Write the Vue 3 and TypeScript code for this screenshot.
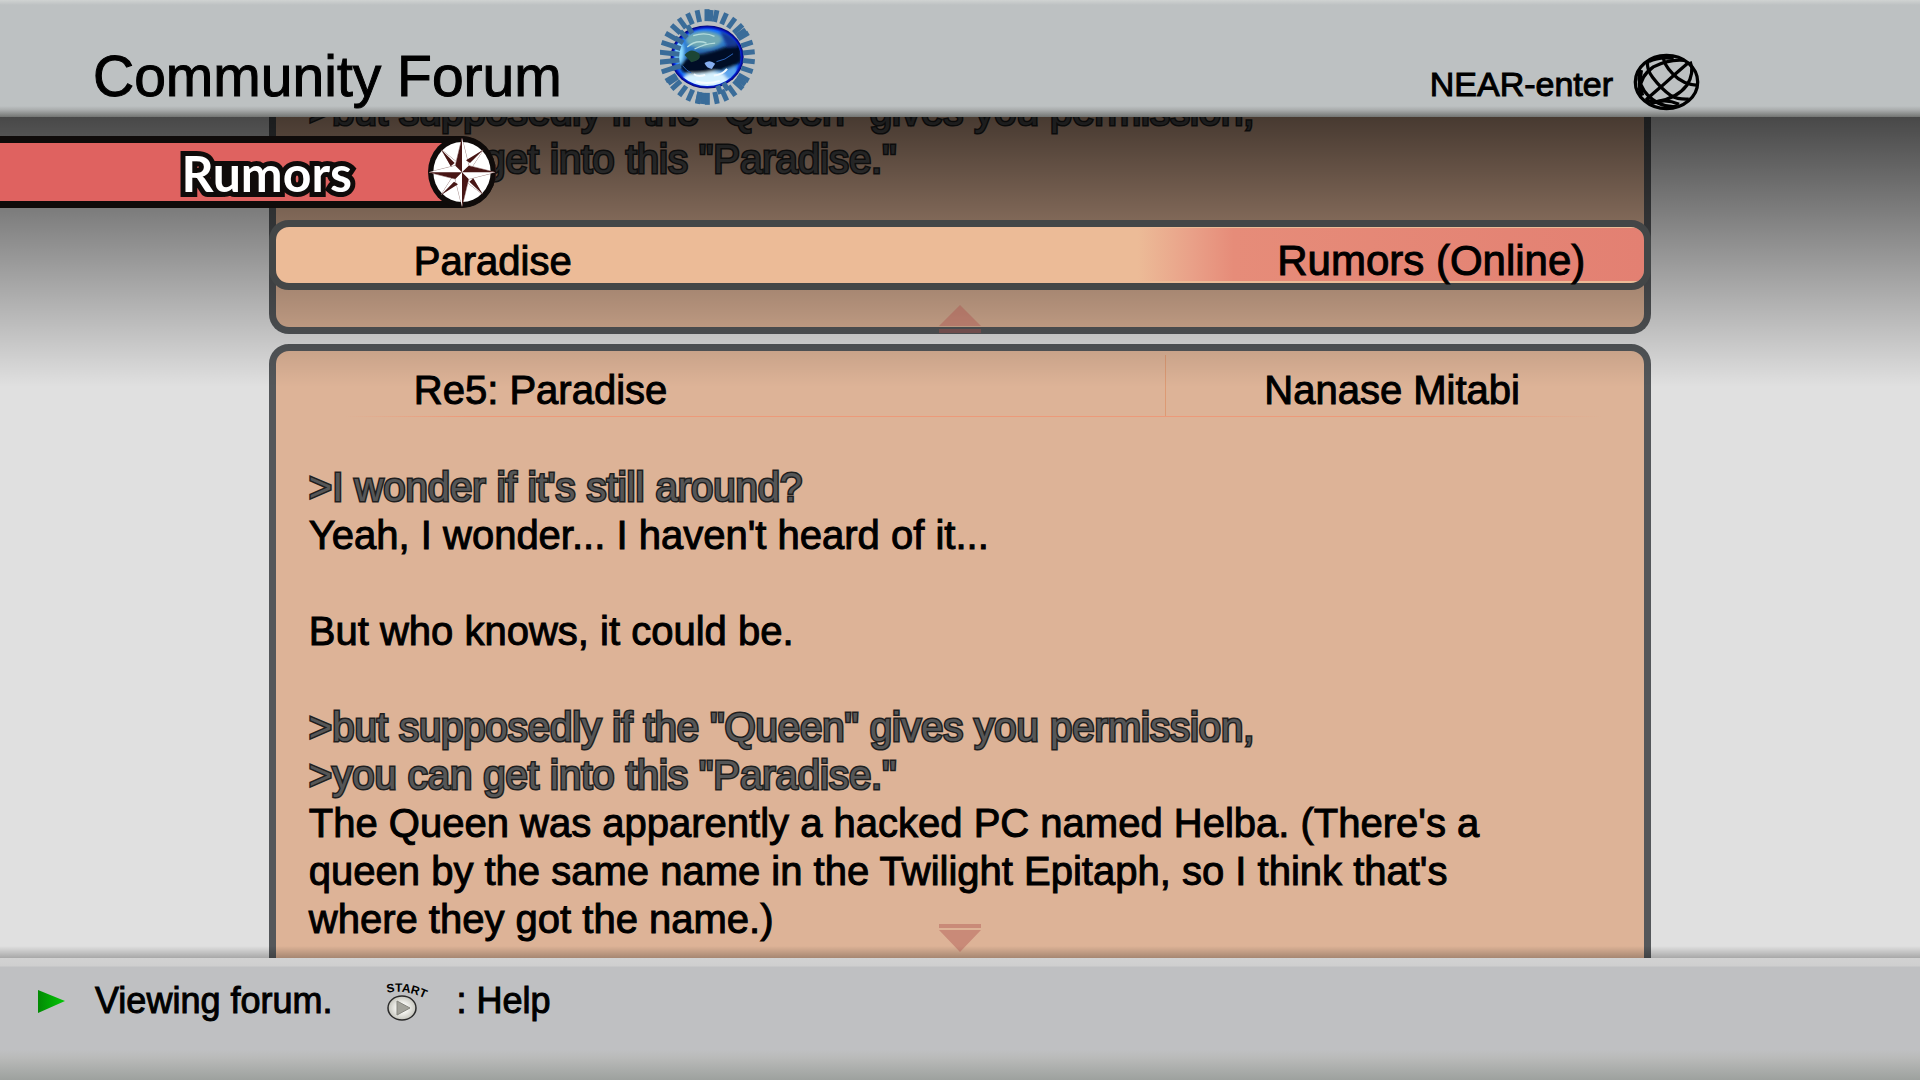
<script setup lang="ts">
interface Line {
  text: string
  quote?: boolean
}

interface Ray {
  angle: number
  from: number
  length: number
}

const previousPost: Line[] = [
  { text: '>but supposedly if the "Queen" gives you permission,', quote: true },
  { text: '>you can get into this "Paradise."', quote: true },
]

const currentPost: Line[] = [
  { text: ">I wonder if it's still around?", quote: true },
  { text: "Yeah, I wonder... I haven't heard of it..." },
  { text: '' },
  { text: 'But who knows, it could be.' },
  { text: '' },
  { text: '>but supposedly if the "Queen" gives you permission,', quote: true },
  { text: '>you can get into this "Paradise."', quote: true },
  { text: "The Queen was apparently a hacked PC named Helba. (There's a" },
  { text: "queen by the same name in the Twilight Epitaph, so I think that's" },
  { text: 'where they got the name.)' },
]

// Outer ring of evenly spaced rays, then the drifting inner ones that cross the globe's left edge.
const rays: Ray[] = [
  ...Array.from({ length: 30 }, (_, i) => ({ angle: i * 12, from: 108, length: 36 })),
  ...[5, 55, 126, 186, 192, 236].map((angle) => ({ angle, from: 108, length: 34 })),
  ...[252, 264, 276, 288, 301, 314, 328].map((angle) => ({ angle, from: 84, length: 28 })),
  ...[148, 160].map((angle) => ({ angle, from: 92, length: 26 })),
]
</script>

<template>
  <div class="screen">
    <header class="top">
      <h1>Community Forum</h1>
      <svg class="earth" viewBox="56 20 286 300" aria-hidden="true">
        <defs>
          <radialGradient id="sea" cx="0.5" cy="0.5" r="0.5">
            <stop offset="0" stop-color="#2a64a4" />
            <stop offset="0.72" stop-color="#2f7fd0" />
            <stop offset="0.86" stop-color="#1470ff" />
            <stop offset="0.94" stop-color="#0418c4" />
            <stop offset="1" stop-color="#00006c" />
          </radialGradient>
          <filter id="soft" x="-20%" y="-20%" width="140%" height="140%">
            <feGaussianBlur stdDeviation="5" />
          </filter>
          <filter id="fine" x="-20%" y="-20%" width="140%" height="140%">
            <feGaussianBlur stdDeviation="2" />
          </filter>
          <clipPath id="disc"><ellipse cx="198" cy="170" rx="101" ry="87" /></clipPath>
        </defs>
        <ellipse cx="198" cy="170" rx="110" ry="95" fill="url(#sea)" />
        <g clip-path="url(#disc)">
          <g filter="url(#soft)">
            <ellipse cx="188" cy="118" rx="54" ry="26" fill="#6fa9b4" />
            <ellipse cx="114" cy="156" rx="14" ry="34" fill="#8fdcff" />
            <ellipse cx="196" cy="240" rx="74" ry="28" fill="#d6f1ff" />
            <ellipse cx="268" cy="214" rx="20" ry="24" fill="#5aa4ee" />
            <path d="M116 200 Q136 160 186 160 Q240 148 300 118 L302 184 Q262 212 224 210 Q170 226 126 216 Z" fill="#010725" />
            <path d="M236 92 Q284 106 292 138 L258 140 Z" fill="#163a94" />
          </g>
          <g filter="url(#fine)">
            <path d="M130 164 Q148 140 172 158 Q186 178 150 186 Z" fill="#1c4536" />
            <path d="M190 188 Q206 176 222 190 L212 206 Q196 204 190 188" fill="#86aef0" />
            <path d="M156 106 Q192 94 220 108 M138 140 Q166 116 196 128 M160 146 Q190 130 222 128" fill="none" stroke="#b4dcdc" stroke-width="4" />
            <path d="M158 222 Q172 232 192 224 M218 226 Q244 224 258 206 M164 244 Q200 254 236 242" fill="none" stroke="#f4fbff" stroke-width="6" />
            <path d="M124 196 Q136 212 150 218 M226 184 Q252 180 276 160" fill="none" stroke="#2c62b8" stroke-width="3" />
          </g>
        </g>
        <g fill="#3a6c99">
          <rect
            v-for="(ray, i) in rays"
            :key="i"
            :x="190"
            :y="170 - ray.from - ray.length"
            width="15"
            :height="ray.length"
            :transform="`rotate(${ray.angle} 198 170)`"
          />
        </g>
      </svg>
      <div class="near">
        <span>NEAR-enter</span>
        <svg class="wire" viewBox="98 66 204 176" aria-hidden="true">
          <g fill="none" stroke="#000" stroke-width="10">
            <ellipse cx="200" cy="154" rx="95" ry="81" />
            <path d="M190 74 Q190 100 220 130 Q250 162 296 164" />
            <path d="M268 94 Q226 130 184 168 Q156 192 138 208" />
            <path d="M143 88 Q138 114 158 140 Q184 174 214 196 Q236 208 268 206" />
            <path d="M118 180 Q120 136 160 108 Q206 84 254 88" />
            <path d="M146 92 Q176 76 222 82" />
            <path d="M272 92 Q286 126 262 164 Q232 204 170 214 Q150 216 136 206" />
            <path d="M122 118 Q110 148 124 166 Q136 196 174 218 Q204 232 232 228" />
            <path d="M122 118 Q114 164 126 196" stroke-width="13" />
            <path d="M152 220 Q196 202 238 222" />
          </g>
        </svg>
      </div>
    </header>

    <main class="board">
      <div class="thread">
        <article class="post post-above">
          <div class="text">
            <p v-for="(line, i) in previousPost" :key="i" :class="{ quote: line.quote }">{{ line.text }}</p>
          </div>
        </article>
        <article class="post">
          <div class="post-head">
            <h3>Re5: Paradise</h3>
            <span class="author">Nanase Mitabi</span>
          </div>
          <div class="text">
            <p v-for="(line, i) in currentPost" :key="i" :class="{ quote: line.quote }">{{ line.text }}</p>
          </div>
        </article>
      </div>

      <div class="shade"></div>

      <svg class="scroll-mark up" viewBox="0 0 42 28" aria-hidden="true">
        <path d="M21 0 L42 21 H0 Z M0 24 H42 V28 H0 Z" />
      </svg>
      <svg class="scroll-mark down" viewBox="0 0 42 28" aria-hidden="true">
        <path d="M21 28 L42 6 H0 Z M0 0 H42 V4 H0 Z" />
      </svg>

      <div class="topic">
        <h2>Paradise</h2>
        <span>Rumors (Online)</span>
      </div>

      <div class="category">
        <span>Rumors</span>
        <svg viewBox="84 47 204 216" aria-hidden="true">
          <ellipse cx="186" cy="155" rx="102" ry="108" fill="#0f0b0a" />
          <ellipse cx="186" cy="155" rx="86" ry="90" fill="#fff" />
          <g fill="#fff" stroke="#4a1615" stroke-width="1.5">
            <path d="M124 88 L176 130 L160 146 Z M250 88 L212 146 L196 130 Z M248 222 L196 182 L212 166 Z M123 224 L160 166 L176 182 Z" />
            <path d="M186 53 L206 136 L286 156 L206 176 L186 259 L166 176 L86 156 L166 136 Z" />
          </g>
          <g fill="#471615">
            <path d="M124 88 L164 128 L152 138 Z M250 88 L210 128 L198 120 Z M248 222 L208 184 L220 174 Z M123 224 L162 184 L174 192 Z" />
            <path d="M186 53 L186 156 L166 136 Z M286 156 L186 156 L206 136 Z M186 259 L186 156 L206 176 Z M86 156 L186 156 L166 176 Z" />
          </g>
        </svg>
      </div>
    </main>

    <footer class="bottom">
      <svg class="cursor" viewBox="0 0 27 23" aria-hidden="true">
        <defs>
          <linearGradient id="go">
            <stop offset="0" stop-color="#028a04" />
            <stop offset="1" stop-color="#04c806" />
          </linearGradient>
        </defs>
        <path d="M0 0 L27 11 L0 23 Z" fill="url(#go)" />
      </svg>
      <span class="status">Viewing forum.</span>
      <button type="button" class="help">
        <svg viewBox="0 0 40 42" aria-hidden="true">
          <defs>
            <path id="arch" d="M1 12 Q20 8 40 18" />
            <radialGradient id="knob">
              <stop offset="0.4" stop-color="#f4f4f0" />
              <stop offset="1" stop-color="#c4c4bc" />
            </radialGradient>
          </defs>
          <text class="start"><textPath href="#arch">START</textPath></text>
          <ellipse cx="16" cy="27" rx="14" ry="12" fill="url(#knob)" stroke="#2a2a2a" stroke-width="1.5" />
          <path d="M11 20 L24 27 L11 34 Z" fill="#a2a29a" stroke="#85857e" />
        </svg>
        <span>: Help</span>
      </button>
    </footer>
  </div>
</template>

<style>
body {
  margin: 0;
}
</style>

<style scoped>
.screen {
  display: flex;
  flex-direction: column;
  height: 100vh;
  overflow: hidden;
  color: #000;
  font-family: "Liberation Sans", Arial, sans-serif;
  font-size: 40px;
  line-height: 48px;
  -webkit-text-stroke: 1px currentColor;
}

h1,
h2,
h3,
p {
  margin: 0;
  font-size: inherit;
  font-weight: 400;
}

/* title bar */
.top {
  display: flex;
  flex: none;
  align-items: flex-end;
  box-sizing: border-box;
  height: 117px;
  padding: 0 220px 0 93px;
  background: linear-gradient(#d0d3d2 0, #bdc1c2 5px, #bdc1c2 106px, #a9acac 110px, #737573 117px);
}

h1 {
  font-size: 57px;
  line-height: 64px;
  padding-bottom: 9px;
}

.earth {
  width: 95px;
  height: 100px;
  margin-left: 98px;
  padding-bottom: 10px;
}

.near {
  display: flex;
  align-items: center;
  gap: 20px;
  margin-left: auto;
  padding-bottom: 6px;
  font-size: 34px;
  line-height: 40px;
}

.near span {
  padding-top: 4px;
}

.wire {
  width: 67px;
  height: 58px;
}

/* scrolled thread */
.board {
  position: relative;
  flex: 1;
  min-height: 0;
  overflow: hidden;
  background: #e0e0e0;
}

.thread {
  display: flex;
  flex-direction: column;
  gap: 10px;
  width: 72%;
  margin: -30px auto 0;
}

.post {
  flex: none;
  padding-bottom: 96px;
  border: 7px solid #54575a;
  border-radius: 20px;
  background: #ddb397;
}

.post-above {
  padding-bottom: 144px;
  border-top: 0;
  border-radius: 0 0 20px 20px;
}

.post-head,
.topic {
  display: grid;
  grid-template-columns: 65% 35%;
  align-items: end;
}

.post-head {
  box-sizing: border-box;
  height: 66px;
  margin-bottom: 46px;
  padding-bottom: 3px;
  background:
    linear-gradient(90deg, transparent 5%, #ec9a7a 14%, #ec9a7a 86%, transparent 97%) bottom / 100% 1px no-repeat,
    linear-gradient(#dc9a74, #dc9a74) 65% 100% / 1px 62px no-repeat;
}

h2,
h3 {
  padding-left: 138px;
}

.author {
  padding-left: 99px;
}

.text {
  padding-left: 33px;
}

.text p {
  min-height: 48px;
  white-space: nowrap;
}

.quote {
  color: #555657;
  -webkit-text-stroke: 3px #1f1f1f;
  paint-order: stroke fill;
}

.shade {
  position: absolute;
  inset: 0;
  background:
    linear-gradient(rgba(0, 0, 0, 0.68), rgba(0, 0, 0, 0)) top / 100% 270px no-repeat,
    linear-gradient(rgba(0, 0, 0, 0), rgba(0, 0, 0, 0.25)) bottom / 100% 12px no-repeat;
}

.scroll-mark {
  position: absolute;
  left: calc(50% - 21px);
  width: 42px;
  height: 28px;
  fill: rgba(172, 78, 76, 0.4);
}

.up {
  top: 188px;
}

.down {
  bottom: 6px;
}

.topic {
  position: absolute;
  top: 103px;
  left: 14%;
  box-sizing: border-box;
  width: 72%;
  height: 70px;
  border: 7px solid #434647;
  border-radius: 20px;
  line-height: 44px;
  background:
    linear-gradient(90deg, transparent 63%, #e9a088 67%, #e68c79 70%, #e38072) 0 1px / 100% calc(100% - 3px) no-repeat padding-box,
    #ecbb97;
}

.topic span {
  padding-left: 112px;
  font-size: 42px;
}

.category {
  position: absolute;
  top: 19px;
  left: 0;
  display: flex;
  align-items: center;
  justify-content: flex-end;
  gap: 76px;
  box-sizing: border-box;
  width: 496px;
  height: 72px;
  border: solid #0f0b0a;
  border-width: 7px 0;
  border-radius: 0 36px 36px 0;
  background: #df6260;
  color: #fff;
  font-family: Lato, "Liberation Sans", sans-serif;
  font-size: 50px;
  font-weight: 700;
  line-height: 56px;
  -webkit-text-stroke: 10px #0f0b0a;
  paint-order: stroke fill;
}

.category span {
  padding-top: 2px;
}

.category svg {
  flex: none;
  width: 68px;
  height: 72px;
}

/* status bar */
.bottom {
  display: flex;
  flex: none;
  align-items: flex-start;
  box-sizing: border-box;
  height: 122px;
  padding: 23px 38px 0;
  background: linear-gradient(#d2d2d2 0, #cfcfcf 8px, #bfc0c2 9px, #bfc0c2 92px, #b9bab9 100px, #9da19e 122px);
  font-size: 36px;
  line-height: 40px;
}

.cursor {
  width: 27px;
  height: 23px;
  margin-top: 9px;
}

.status {
  margin-left: 30px;
}

.help {
  display: flex;
  align-items: flex-start;
  gap: 30px;
  margin-left: 54px;
  padding: 0;
  border: 0;
  background: none;
  color: inherit;
  font: inherit;
  -webkit-text-stroke: inherit;
}

.help svg {
  width: 40px;
  height: 42px;
  overflow: visible;
}

.start {
  font-size: 12px;
  font-weight: 700;
  -webkit-text-stroke: 0;
}
</style>
